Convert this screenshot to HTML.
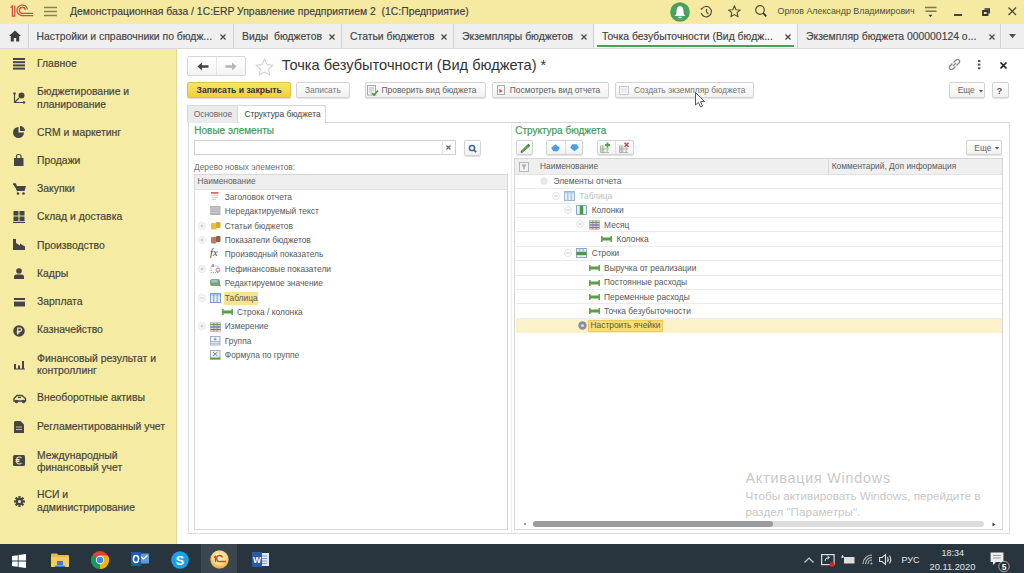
<!DOCTYPE html>
<html><head><meta charset="utf-8">
<style>
*{margin:0;padding:0;box-sizing:border-box}
html,body{width:1024px;height:573px;overflow:hidden;background:#fff;font-family:"Liberation Sans",sans-serif;color:#404040}
.si{-webkit-text-stroke:0.18px currentColor}.tab,.ht{-webkit-text-stroke:0.15px currentColor}
.a{position:absolute;white-space:nowrap}
svg{position:absolute;overflow:visible}
#hdr{left:0;top:0;width:1024px;height:24px;background:#f6eaa3}
.ht{font-size:10.4px;color:#3c3c3c}
#tabs{left:0;top:24px;width:1024px;height:25px;background:#efefef;border-bottom:1px solid #d9d9d9}
.tab{position:absolute;top:0;height:24px;border-left:1px solid #d2d2d2;font-size:10.4px;line-height:26px;color:#424242;padding-left:8px;white-space:nowrap}
#side{left:0;top:49px;width:177px;height:495px;background:#f6eba3;border-right:1px solid #e3d799}
.si{position:absolute;left:37px;font-size:10.4px;line-height:12.3px;color:#45433a;white-space:nowrap}
#task{left:0;top:544px;width:1024px;height:29px;background:#28353f}
</style></head><body>
<div class="a" id="hdr">
  <!-- 1C logo -->
  <svg style="left:0px;top:0px" width="40" height="22"><g fill="none" stroke="#cf4b3c" stroke-width="1.25"><path d="M10.6 7.6L12.4 6V16H14.8V5.5"/><path d="M27.5 9.4A5.3 5.3 0 1 0 22.6 15.6H33"/><path d="M25.4 10A3 3 0 1 0 22.6 13.3H33"/></g></svg>
  <svg style="left:44px;top:6px" width="13" height="11"><g stroke="#8a8050" stroke-width="1.3"><path d="M0 1.5H13M0 5.5H13M0 9.5H13"/></g></svg>
  <div class="a ht" style="left:70px;top:5.9px">Демонстрационная база / 1С:ERP Управление предприятием 2&nbsp; (1С:Предприятие)</div>
  <svg style="left:669.5px;top:1.6px" width="20" height="20"><circle cx="10" cy="10" r="9.8" fill="#4aa15c"/><path d="M10 4.2Q6.8 4.2 6.6 8.5L6.3 12L4.6 14H15.4L13.7 12L13.4 8.5Q13.2 4.2 10 4.2Z" fill="#fff"/><ellipse cx="10" cy="15.6" rx="1.8" ry="1" fill="#fff"/></svg>
  <svg style="left:700px;top:6px" width="13" height="11"><g fill="none" stroke="#585038" stroke-width="1.15"><path d="M1.6 3.2A5.2 5.2 0 1 1 1.2 7"/><path d="M6.5 3V6L8.5 8.2"/></g><circle cx="1.5" cy="2.8" r="0.9" fill="#585038"/></svg>
  <svg style="left:727.5px;top:4.8px" width="13" height="12.5"><path d="M6.4 0.8L8 4.7L12.2 5L9 7.7L10 11.8L6.4 9.6L2.8 11.8L3.8 7.7L0.6 5L4.8 4.7Z" fill="none" stroke="#585038" stroke-width="1.1" stroke-linejoin="round"/></svg>
  <svg style="left:755px;top:5px" width="13" height="13"><circle cx="5" cy="5" r="4.3" fill="none" stroke="#585038" stroke-width="1.2"/><path d="M8.2 8.2L11.3 11.3" stroke="#333" stroke-width="1.8"/></svg>
  <div class="a" style="left:777.5px;top:6.1px;font-size:8.9px;color:#4e4a3c">Орлов Александр Владимирович</div>
  <svg style="left:924.5px;top:5.5px" width="12" height="12"><g stroke="#7d7456" stroke-width="1.4"><path d="M0 1.5H11.5M0.5 5.2H11.5"/></g><path d="M3.5 8.8H7.5L5.5 11Z" fill="#333"/></svg>
  <svg style="left:954px;top:13.5px" width="8" height="2"><path d="M0 1H8" stroke="#333" stroke-width="1.8"/></svg>
  <svg style="left:981.5px;top:8px" width="8" height="7.5"><path d="M1 3H5.5V7H1Z" fill="none" stroke="#333" stroke-width="1.8"/><path d="M2.5 1H7.2V5.5" fill="none" stroke="#333" stroke-width="1.6"/></svg>
  <svg style="left:1008px;top:6.8px" width="8.5" height="8.5"><path d="M0.5 0.5L8 8M8 0.5L0.5 8" stroke="#444" stroke-width="1.2"/></svg>
</div>
<div class="a" id="tabs">
  <svg style="left:9px;top:6px" width="12" height="12" viewBox="0 0 12 12"><path d="M6 0.5L0 6H1.8V11.5H4.8V8H7.2V11.5H10.2V6H12Z" fill="#3c3c3c"/></svg>
  <div class="tab" style="left:27.5px;width:205.5px;padding-left:8px">Настройки и справочники по бюдж...<svg style="left:191px;top:9.5px" width="6" height="6"><path d="M0.5 0.5L5.5 5.5M5.5 0.5L0.5 5.5" stroke="#4a4a4a" stroke-width="1.3"/></svg></div>
  <div class="tab" style="left:233px;width:108px">Виды&nbsp; бюджетов<svg style="left:94.5px;top:9.5px" width="6" height="6"><path d="M0.5 0.5L5.5 5.5M5.5 0.5L0.5 5.5" stroke="#4a4a4a" stroke-width="1.3"/></svg></div>
  <div class="tab" style="left:341px;width:112px">Статьи бюджетов<svg style="left:98.5px;top:9.5px" width="6" height="6"><path d="M0.5 0.5L5.5 5.5M5.5 0.5L0.5 5.5" stroke="#4a4a4a" stroke-width="1.3"/></svg></div>
  <div class="tab" style="left:453px;width:140px">Экземпляры бюджетов<svg style="left:126.5px;top:9.5px" width="6" height="6"><path d="M0.5 0.5L5.5 5.5M5.5 0.5L0.5 5.5" stroke="#4a4a4a" stroke-width="1.3"/></svg></div>
  <div class="tab" style="left:593px;width:204px;background:#f8f8f8">Точка безубыточности (Вид бюдж...<svg style="left:190.5px;top:9.5px" width="6" height="6"><path d="M0.5 0.5L5.5 5.5M5.5 0.5L0.5 5.5" stroke="#4a4a4a" stroke-width="1.3"/></svg><div style="position:absolute;left:3px;right:3px;bottom:1px;height:2px;background:#4aa05a"></div></div>
  <div class="tab" style="left:797px;width:203px">Экземпляр бюджета 000000124 о...<svg style="left:191px;top:9.5px" width="6" height="6"><path d="M0.5 0.5L5.5 5.5M5.5 0.5L0.5 5.5" stroke="#4a4a4a" stroke-width="1.3"/></svg></div>
  <div class="tab" style="left:1000px;width:24px"></div>
  <svg style="left:1008.6px;top:9.8px" width="7" height="4.5"><path d="M0 0H7L3.5 4.3Z" fill="#505050"/></svg>
</div>
<div class="a" id="side">
  <div class="si" style="top:9.0px">Главное</div>
  <svg style="left:13px;top:calc(-49px + 58px)" width="12" height="12"><g fill="#454545"><rect y="0" width="12" height="2"/><rect y="3.2" width="12" height="2"/><rect y="6.4" width="12" height="2"/><rect y="9.6" width="12" height="2"/></g></svg>
  <div class="si" style="top:37.4px">Бюджетирование и<br>планирование</div>
  <svg style="left:13px;top:calc(-49px + 92px)" width="12" height="12"><g fill="none" stroke="#454545" stroke-width="1.2"><path d="M1.5 1.5V10.5H11"/><path d="M1.5 10.5L6 6"/></g><g fill="#454545"><circle cx="1.5" cy="1.5" r="1.2"/><circle cx="11" cy="10.5" r="1.2"/><circle cx="8.5" cy="3.5" r="3"/></g></svg>
  <div class="si" style="top:77.5px">CRM и маркетинг</div>
  <svg style="left:13px;top:calc(-49px + 126px)" width="12" height="12"><path d="M5.5 1A5.5 5.5 0 1 0 11 6.5H5.5Z" fill="#454545"/><path d="M7 0A5 5 0 0 1 12 5H7Z" fill="#454545"/></svg>
  <div class="si" style="top:105.9px">Продажи</div>
  <svg style="left:14px;top:calc(-49px + 154px)" width="10" height="12"><path d="M0 4H9.5V12H0Z" fill="#454545"/><path d="M2.5 5V2Q2.5 0.5 4.75 0.5Q7 0.5 7 2V5" fill="none" stroke="#454545" stroke-width="1.2"/></svg>
  <div class="si" style="top:134.2px">Закупки</div>
  <svg style="left:12.5px;top:calc(-49px + 183px)" width="13" height="12"><path d="M0 1H2.5L3.5 3H13L11.5 8H4.5Z" fill="#454545"/><path d="M0 1H2.5L4.5 8" fill="none" stroke="#454545" stroke-width="1.3"/><circle cx="5" cy="10.5" r="1.3" fill="#454545"/><circle cx="10.5" cy="10.5" r="1.3" fill="#454545"/></svg>
  <div class="si" style="top:162.4px">Склад и доставка</div>
  <svg style="left:13px;top:calc(-49px + 211px)" width="12" height="12"><g fill="#454545"><rect x="0.5" y="0" width="5" height="4.5"/><rect x="6.5" y="0" width="5" height="4.5"/><rect x="0.5" y="5.5" width="5" height="4.5"/><rect x="6.5" y="5.5" width="5" height="4.5"/><rect x="0" y="10.8" width="12" height="1.2"/></g></svg>
  <div class="si" style="top:190.7px">Производство</div>
  <svg style="left:13px;top:calc(-49px + 239px)" width="12" height="11"><path d="M0 11V0H3V4L7 6.5V4.5L12 7.5V11Z" fill="#454545"/></svg>
  <div class="si" style="top:218.9px">Кадры</div>
  <svg style="left:14px;top:calc(-49px + 268px)" width="10" height="11"><circle cx="5" cy="3" r="2.8" fill="#454545"/><path d="M0 11V8.5Q0 6.5 2.5 6.5H7.5Q10 6.5 10 8.5V11Z" fill="#454545"/></svg>
  <div class="si" style="top:247.1px">Зарплата</div>
  <svg style="left:13.5px;top:calc(-49px + 298px)" width="11" height="9"><rect x="0" y="0" width="11" height="8.5" fill="#454545"/><rect x="0" y="2" width="11" height="1.6" fill="#f7eba6"/></svg>
  <div class="si" style="top:275.1px">Казначейство</div>
  <svg style="left:13px;top:calc(-49px + 325px)" width="12" height="12"><circle cx="6" cy="6" r="5.8" fill="#454545"/><path d="M4.7 9.5V3H6.8Q8.5 3 8.5 4.7Q8.5 6.4 6.8 6.4H3.8M3.8 7.8H6.5" fill="none" stroke="#f7eba6" stroke-width="1.2"/></svg>
  <div class="si" style="top:304.2px">Финансовый результат и<br>контроллинг</div>
  <svg style="left:13.5px;top:calc(-49px + 361px)" width="11" height="9"><g fill="#454545"><rect x="0" y="3" width="2" height="5"/><rect x="4" y="4.5" width="2" height="3.5"/><rect x="8" y="0" width="2" height="8"/><rect x="0" y="7.5" width="11" height="1"/></g></svg>
  <div class="si" style="top:343.4px">Внеоборотные активы</div>
  <svg style="left:12.5px;top:calc(-49px + 394px)" width="14" height="10"><path d="M1 7V4.5L4 1.5H9L12.5 4.5V7Z" fill="none" stroke="#454545" stroke-width="1.4"/><path d="M5 3.5H8" stroke="#454545" stroke-width="1.2"/><circle cx="3.5" cy="7.5" r="1.8" fill="#454545"/><circle cx="10.5" cy="7.5" r="1.8" fill="#454545"/></svg>
  <div class="si" style="top:372.0px">Регламентированный учет</div>
  <svg style="left:14px;top:calc(-49px + 421px)" width="10" height="12"><path d="M0 1.5Q0 0 1.5 0H6.5L10 3.5V12H0Z" fill="#454545"/><rect x="2" y="5.5" width="6" height="1" fill="#c9c08a"/><rect x="2" y="8" width="6" height="1" fill="#c9c08a"/></svg>
  <div class="si" style="top:400.5px">Международный<br>финансовый учет</div>
  <svg style="left:13px;top:calc(-49px + 455px)" width="12" height="11"><rect x="0" y="0" width="12" height="11" rx="1.5" fill="#454545"/><path d="M8.5 3Q7.8 2 6.3 2Q3.5 2 3.5 5.5Q3.5 9 6.3 9Q7.8 9 8.5 8M2.5 4.6H6.5M2.5 6.4H6.5" fill="none" stroke="#f0e6b0" stroke-width="1.1"/></svg>
  <div class="si" style="top:440.3px">НСИ и<br>администрирование</div>
  <svg style="left:13.5px;top:calc(-49px + 495.5px)" width="11" height="11" viewBox="0 0 11 11"><path d="M4.5 0H6.5L6.8 1.6L8.2 2.3L9.6 1.4L10.9 2.8L10 4.2L10.5 5.6L12 6" fill="none"/><g fill="#454545"><circle cx="5.5" cy="5.5" r="3.6"/><rect x="4.4" y="0" width="2.2" height="11"/><rect x="0" y="4.4" width="11" height="2.2"/><rect x="4.4" y="0" width="2.2" height="11" transform="rotate(45 5.5 5.5)"/><rect x="4.4" y="0" width="2.2" height="11" transform="rotate(-45 5.5 5.5)"/></g><circle cx="5.5" cy="5.5" r="1.5" fill="#f7eba6"/></svg>
</div>
<div id="content">
<div class="a" style="left:187px;top:55.5px;width:58.50px;height:20.00px;border:1px solid #d6d6d6;border-radius:2px;background:linear-gradient(#ffffff,#f3f3f3)"></div>
<div class="a" style="left:216px;top:56.5px;width:1.00px;height:18.00px;background:#e6e6e6"></div>
<svg style="left:197px;top:62px" width="12" height="9"><path d="M0.5 4.5L5 0.5V3.2H11.5V5.8H5V8.5Z" fill="#444"/></svg>
<svg style="left:225px;top:62px" width="12" height="9"><path d="M11.5 4.5L7 0.5V3.2H0.5V5.8H7V8.5Z" fill="#b4b4b4"/></svg>
<svg style="left:254.5px;top:57.5px" width="19" height="17"><path d="M9.5 1L12 6.6L18 7.2L13.5 11.2L14.8 17L9.5 14L4.2 17L5.5 11.2L1 7.2L7 6.6Z" fill="none" stroke="#d2d2d2" stroke-width="1.1" stroke-linejoin="round"/></svg>
<div class="a" style="left:281.7px;top:58.39px;font-size:14.6px;line-height:1;color:#333;font-weight:normal;">Точка безубыточности (Вид бюджета) *</div>
<svg style="left:948px;top:58px" width="13" height="13"><g fill="none" stroke="#888" stroke-width="1.3"><path d="M5.5 4.5L7.8 2.2Q9.5 0.5 11 2Q12.5 3.5 10.8 5.2L8.5 7.5"/><path d="M7.5 8.5L5.2 10.8Q3.5 12.5 2 11Q0.5 9.5 2.2 7.8L4.5 5.5"/><path d="M5 8L8 5"/></g></svg>
<svg style="left:977.6px;top:60.3px" width="3" height="9"><g fill="#555"><rect x="0" y="0" width="2.4" height="2"/><rect x="0" y="3.6" width="2.4" height="2"/><rect x="0" y="7.2" width="2.4" height="2"/></g></svg>
<svg style="left:999.5px;top:61.5px" width="7" height="7"><path d="M0.5 0.5L6.5 6.5M6.5 0.5L0.5 6.5" stroke="#222" stroke-width="1.7"/></svg>
<div class="a" style="left:187.2px;top:82.3px;width:103.50px;height:16.20px;border:1px solid #dcc04a;border-radius:2px;background:linear-gradient(#fae36a,#f2d035);box-shadow:0 1px 1px rgba(0,0,0,0.15)"></div>
<div class="a" style="left:196.6px;top:86.29px;font-size:8.6px;line-height:1;color:#333;font-weight:bold;">Записать и закрыть</div>
<div class="a" style="left:296px;top:82.3px;width:54.00px;height:16.20px;border:1px solid #d3d3d3;border-radius:2px;background:linear-gradient(#fefefe,#f1f1f1);box-shadow:0 1px 1px rgba(0,0,0,0.12)"></div>
<div class="a" style="left:305px;top:86.46px;font-size:8.4px;line-height:1;color:#777;font-weight:normal;">Записать</div>
<div class="a" style="left:364.6px;top:82.3px;width:121.10px;height:16.20px;border:1px solid #d3d3d3;border-radius:2px;background:linear-gradient(#fefefe,#f1f1f1);box-shadow:0 1px 1px rgba(0,0,0,0.12)"></div>
<svg style="left:367px;top:85px" width="12" height="11"><rect x="0.5" y="0.5" width="8" height="9.5" fill="#f4f4f4" stroke="#aaa"/><path d="M2 3H7M2 5H7M2 7H5" stroke="#bbb"/><path d="M5 8L7 10L11 5.5" fill="none" stroke="#3a9a4a" stroke-width="1.6"/></svg>
<div class="a" style="left:381.6px;top:86.46px;font-size:8.4px;line-height:1;color:#606060;font-weight:normal;">Проверить вид бюджета</div>
<div class="a" style="left:491.5px;top:82.3px;width:117.30px;height:16.20px;border:1px solid #d3d3d3;border-radius:2px;background:linear-gradient(#fefefe,#f1f1f1);box-shadow:0 1px 1px rgba(0,0,0,0.12)"></div>
<svg style="left:496.5px;top:85px" width="8" height="10"><rect x="0.5" y="0.5" width="7" height="9" fill="#f6f6f6" stroke="#aaa"/><path d="M2.5 4L5.5 6L2.5 8Z" fill="#d04030"/></svg>
<div class="a" style="left:509.8px;top:86.46px;font-size:8.4px;line-height:1;color:#606060;font-weight:normal;">Посмотреть вид отчета</div>
<div class="a" style="left:615.2px;top:82.3px;width:139.00px;height:16.20px;border:1px solid #d3d3d3;border-radius:2px;background:linear-gradient(#fefefe,#f1f1f1);box-shadow:0 1px 1px rgba(0,0,0,0.12)"></div>
<svg style="left:619px;top:86px" width="10" height="9"><rect x="0.5" y="0.5" width="9" height="8" fill="#f6f6f6" stroke="#c8c8c8"/><path d="M2 3H8M2 5H8" stroke="#ddd"/></svg>
<div class="a" style="left:633.9px;top:86.46px;font-size:8.4px;line-height:1;color:#777;font-weight:normal;">Создать экземпляр бюджета</div>
<div class="a" style="left:949.4px;top:82.2px;width:35.90px;height:16.10px;border:1px solid #d3d3d3;border-radius:2px;background:linear-gradient(#fefefe,#f1f1f1);box-shadow:0 1px 1px rgba(0,0,0,0.12)"></div>
<div class="a" style="left:957.7px;top:86.46px;font-size:8.4px;line-height:1;color:#666;font-weight:normal;">Еще</div>
<svg style="left:978.5px;top:89.5px" width="4" height="3"><path d="M0 0H4L2 2.5Z" fill="#555"/></svg>
<div class="a" style="left:991.6px;top:82.2px;width:17.10px;height:16.10px;border:1px solid #d3d3d3;border-radius:2px;background:linear-gradient(#fefefe,#f1f1f1);box-shadow:0 1px 1px rgba(0,0,0,0.12)"></div>
<div class="a" style="left:996.6px;top:85.72px;font-size:9.5px;line-height:1;color:#555;font-weight:bold;">?</div>
<div class="a" style="left:187.5px;top:122px;width:822.00px;height:412.00px;border:1px solid #dcdcdc;border-top-color:#d6d6d6"></div>
<div class="a" style="left:187.3px;top:105.2px;width:51.20px;height:17.80px;border:1px solid #d6d6d6;border-bottom:none;background:#ebebeb"></div>
<div class="a" style="left:238.5px;top:105.2px;width:87.20px;height:17.80px;border:1px solid #d6d6d6;border-bottom:none;border-left:none;background:#fff"></div>
<div class="a" style="left:193.7px;top:110.06px;font-size:8.4px;line-height:1;color:#666;font-weight:normal;">Основное</div>
<div class="a" style="left:244.4px;top:110.06px;font-size:8.4px;line-height:1;color:#444;font-weight:normal;">Структура бюджета</div>
<div class="a" style="left:510.5px;top:123px;width:1.00px;height:410.00px;background:#efefef"></div>
<div class="a" style="left:194.3px;top:126.40px;font-size:10px;line-height:1;color:#3f9a5b;font-weight:normal;-webkit-text-stroke:0.2px currentColor">Новые элементы</div>
<div class="a" style="left:194px;top:139.5px;width:261.60px;height:15.50px;border:1px solid #cfcfcf;background:#fff"></div>
<div class="a" style="left:442px;top:140px;width:1.00px;height:14.50px;background:#e2e2e2"></div>
<svg style="left:446.2px;top:145.2px" width="5" height="5"><path d="M0.5 0.5L4.5 4.5M4.5 0.5L0.5 4.5" stroke="#666" stroke-width="1.2"/></svg>
<div class="a" style="left:463.8px;top:139.5px;width:17.20px;height:16.50px;border:1px solid #d3d3d3;border-radius:2px;background:linear-gradient(#fefefe,#f1f1f1);box-shadow:0 1px 1px rgba(0,0,0,0.12)"></div>
<svg style="left:468px;top:143.5px" width="10" height="10"><circle cx="4" cy="4" r="2.6" fill="none" stroke="#3d6a8e" stroke-width="1.5"/><path d="M5.8 5.8L8.2 8.2" stroke="#3d6a8e" stroke-width="1.8"/></svg>
<div class="a" style="left:194px;top:162.66px;font-size:8.4px;line-height:1;color:#707070;font-weight:normal;">Дерево новых элементов:</div>
<div class="a" style="left:194px;top:173.5px;width:314.30px;height:356.30px;border:1px solid #d6d6d6;background:#fff"></div>
<div class="a" style="left:195px;top:174.5px;width:312.30px;height:15.40px;background:#efefef;border-bottom:1px solid #e2e2e2"></div>
<div class="a" style="left:197.5px;top:176.66px;font-size:8.4px;line-height:1;color:#606060;font-weight:normal;">Наименование</div>
<div class="a" style="left:515.2px;top:125.50px;font-size:10px;line-height:1;color:#3f9a5b;font-weight:normal;-webkit-text-stroke:0.2px currentColor">Структура бюджета</div>
<div class="a" style="left:515.8px;top:139.5px;width:17.00px;height:15.80px;border:1px solid #d3d3d3;border-radius:2px;background:linear-gradient(#fefefe,#f1f1f1);box-shadow:0 1px 1px rgba(0,0,0,0.12)"></div>
<svg style="left:519.5px;top:142.5px" width="10" height="10"><path d="M2.5 9.2L1 9.5L1.3 8L7.5 1.8L9.2 3.5Z" fill="#58a850" stroke="#3a7a38" stroke-width="0.6"/><path d="M7.5 1.8L8.5 0.8L10 2.3L9.2 3.5Z" fill="#555"/><path d="M1 9.5L1.3 8L2.5 9.2Z" fill="#444"/></svg>
<div class="a" style="left:546.4px;top:139.5px;width:37.10px;height:15.80px;border:1px solid #d3d3d3;border-radius:2px;background:linear-gradient(#fefefe,#f1f1f1);box-shadow:0 1px 1px rgba(0,0,0,0.12)"></div>
<div class="a" style="left:564.6px;top:140.5px;width:1.00px;height:13.80px;background:#dedede"></div>
<svg style="left:550.8px;top:143.8px" width="9" height="7.5"><path d="M4.5 0.3L8.8 3.8L6.8 7.2H2.2L0.2 3.8Z" fill="#4a9ee6"/></svg>
<svg style="left:569.8px;top:143.8px" width="9" height="7.5"><path d="M4.5 7.2L8.8 3.7L6.8 0.3H2.2L0.2 3.7Z" fill="#4a9ee6"/></svg>
<div class="a" style="left:596.8px;top:139.5px;width:37.10px;height:15.80px;border:1px solid #d3d3d3;border-radius:2px;background:linear-gradient(#fefefe,#f1f1f1);box-shadow:0 1px 1px rgba(0,0,0,0.12)"></div>
<div class="a" style="left:614.6px;top:140.5px;width:1.00px;height:13.80px;background:#dedede"></div>
<svg style="left:600px;top:142px" width="11" height="11"><path d="M0.5 3.5V10.5M3.8 3.5V10.5M7.2 5V10.5M0.5 7H9M0.5 10.5H9" stroke="#a8b8a0" stroke-width="0.9"/><path d="M2.2 3L2.2 10.5" stroke="#889880" stroke-width="0.8"/><path d="M7.5 0.5V5.5M5 3H10" stroke="#48a848" stroke-width="1.8"/></svg>
<svg style="left:619px;top:142px" width="11" height="11"><path d="M0.5 3.5V10.5M3.8 3.5V10.5M7.2 5V10.5M0.5 7H9M0.5 10.5H9" stroke="#b8a8a8" stroke-width="0.9"/><path d="M2.2 3L2.2 10.5" stroke="#988888" stroke-width="0.8"/><path d="M5.5 0.8L9.5 4.8M9.5 0.8L5.5 4.8" stroke="#d84040" stroke-width="1.5"/></svg>
<div class="a" style="left:965.9px;top:139.8px;width:36.50px;height:15.40px;border:1px solid #d3d3d3;border-radius:2px;background:linear-gradient(#fefefe,#f1f1f1);box-shadow:0 1px 1px rgba(0,0,0,0.12)"></div>
<div class="a" style="left:974.3px;top:143.76px;font-size:8.4px;line-height:1;color:#666;font-weight:normal;">Еще</div>
<svg style="left:995px;top:147px" width="4" height="3"><path d="M0 0H4L2 2.5Z" fill="#555"/></svg>
<div class="a" style="left:514.2px;top:158px;width:488.60px;height:371.80px;border:1px solid #d6d6d6;background:#fff"></div>
<div class="a" style="left:515.2px;top:159px;width:486.60px;height:15.70px;background:#efefef;border-bottom:1px solid #e2e2e2"></div>
<div class="a" style="left:828px;top:159px;width:1.00px;height:15.70px;background:#dcdcdc"></div>
<svg style="left:518.5px;top:161.5px" width="10" height="10"><rect x="0.5" y="0.5" width="9" height="9" fill="#f2f2f2" stroke="#b8b8b8"/><path d="M2.5 2.5H7.5L5.8 5V7.5L4.2 7V5Z" fill="#aaa"/></svg>
<div class="a" style="left:540px;top:161.66px;font-size:8.4px;line-height:1;color:#606060;font-weight:normal;">Наименование</div>
<div class="a" style="left:831.7px;top:161.86px;font-size:8.4px;line-height:1;color:#606060;font-weight:normal;">Комментарий, Доп информация</div>
<svg style="left:210.5px;top:192.20000000000002px" width="8" height="8"><rect x="0" y="0" width="7.5" height="1.8" fill="#d86a6a"/><path d="M0.5 3.5H7M0.5 5.5H7M0.5 7.5H5" stroke="#c8d8c8" stroke-width="1"/></svg>
<div class="a" style="left:224.8px;top:192.76px;font-size:8.4px;line-height:1;color:#585858;font-weight:normal;">Заголовок отчета</div>
<svg style="left:209.7px;top:206.10000000000002px" width="10.5" height="9"><rect x="0" y="0" width="10.5" height="9" fill="#b4b4b4"/><path d="M0 2H10.5M0 4.2H10.5M0 6.4H10.5" stroke="#d6d6d6" stroke-width="0.8"/></svg>
<div class="a" style="left:224.8px;top:207.16px;font-size:8.4px;line-height:1;color:#585858;font-weight:normal;">Нередактируемый текст</div>
<svg style="left:197.8px;top:221.50000000000003px" width="8" height="8"><circle cx="4" cy="4" r="3.5" fill="#fbfbfb" stroke="#dedede" stroke-width="0.8"/><path d="M2.2 4H5.8M4 2.2V5.8" stroke="#bcbcbc" stroke-width="0.8"/></svg>
<svg style="left:210.7px;top:221.50000000000003px" width="10" height="7.5"><rect x="0" y="1" width="5.5" height="6.5" rx="1" fill="#e8c040"/><rect x="5" y="0" width="4.5" height="6" rx="1" fill="#d8a828"/></svg>
<div class="a" style="left:224.8px;top:221.56px;font-size:8.4px;line-height:1;color:#585858;font-weight:normal;">Статьи бюджетов</div>
<svg style="left:197.8px;top:235.90000000000003px" width="8" height="8"><circle cx="4" cy="4" r="3.5" fill="#fbfbfb" stroke="#dedede" stroke-width="0.8"/><path d="M2.2 4H5.8M4 2.2V5.8" stroke="#bcbcbc" stroke-width="0.8"/></svg>
<svg style="left:210.7px;top:235.90000000000003px" width="10" height="7.5"><rect x="0" y="1" width="5.5" height="6.5" rx="1" fill="#b88060"/><rect x="5" y="0" width="4.5" height="6" rx="1" fill="#906048"/></svg>
<div class="a" style="left:224.8px;top:235.96px;font-size:8.4px;line-height:1;color:#585858;font-weight:normal;">Показатели бюджетов</div>
<div class="a" style="left:210px;top:248.30px;font-family:'Liberation Serif',serif;font-style:italic;font-size:10.5px;line-height:1;color:#444">fx</div>
<div class="a" style="left:224.8px;top:250.36px;font-size:8.4px;line-height:1;color:#585858;font-weight:normal;">Производный показатель</div>
<svg style="left:197.8px;top:264.7px" width="8" height="8"><circle cx="4" cy="4" r="3.5" fill="#fbfbfb" stroke="#dedede" stroke-width="0.8"/><path d="M2.2 4H5.8M4 2.2V5.8" stroke="#bcbcbc" stroke-width="0.8"/></svg>
<svg style="left:210.2px;top:263.7px" width="10" height="9"><rect x="1" y="2" width="7" height="6.5" fill="none" stroke="#7a9ad0" stroke-width="0.9" stroke-dasharray="1.2 1"/><path d="M3 0V3" stroke="#555" stroke-width="1"/><circle cx="8" cy="6" r="2" fill="none" stroke="#d07070" stroke-width="0.9"/></svg>
<div class="a" style="left:224.8px;top:264.76px;font-size:8.4px;line-height:1;color:#585858;font-weight:normal;">Нефинансовые показатели</div>
<svg style="left:210.2px;top:279.1px" width="10.5" height="7"><rect x="0" y="0" width="10" height="7" rx="2" fill="#78a870"/><rect x="1.5" y="0.8" width="6" height="2.8" fill="#a0c0e0"/><path d="M9 5.5L10.5 7" stroke="#c86040" stroke-width="1.2"/></svg>
<div class="a" style="left:224.8px;top:279.16px;font-size:8.4px;line-height:1;color:#585858;font-weight:normal;">Редактируемое значение</div>
<svg style="left:197.8px;top:293.5px" width="8" height="8"><circle cx="4" cy="4" r="3.5" fill="#fbfbfb" stroke="#dedede" stroke-width="0.8"/><path d="M2.2 4H5.8" stroke="#bcbcbc" stroke-width="0.8"/></svg>
<svg style="left:209.7px;top:292.7px" width="11" height="10"><rect x="0.5" y="0.5" width="10" height="9" fill="#e4ecf6" stroke="#7aa0d0"/><path d="M3.8 0.5V9.5M7.2 0.5V9.5" stroke="#7aa0d0"/><rect x="0.5" y="0.5" width="10" height="2" fill="#7aa0d0" opacity="0.5"/></svg>
<div class="a" style="left:223.5px;top:291.5px;width:34.50px;height:13.30px;background:#f8e394;border-radius:1px"></div>
<div class="a" style="left:224.8px;top:293.56px;font-size:8.4px;line-height:1;color:#585858;font-weight:normal;">Таблица</div>
<svg style="left:222.2px;top:309.40000000000003px" width="11" height="6"><rect x="0" y="0" width="1.6" height="6" fill="#6aa060"/><rect x="9.4" y="0" width="1.6" height="6" fill="#6aa060"/><rect x="1" y="1.5" width="9" height="3" fill="#5aa040"/></svg>
<div class="a" style="left:237.0px;top:307.96px;font-size:8.4px;line-height:1;color:#585858;font-weight:normal;">Строка / колонка</div>
<svg style="left:197.8px;top:322.3px" width="8" height="8"><circle cx="4" cy="4" r="3.5" fill="#fbfbfb" stroke="#dedede" stroke-width="0.8"/><path d="M2.2 4H5.8M4 2.2V5.8" stroke="#bcbcbc" stroke-width="0.8"/></svg>
<svg style="left:210px;top:321.5px" width="11" height="10"><rect x="0.5" y="0.5" width="10" height="9" fill="#f0f0f0" stroke="#aaa" stroke-width="0.6"/><path d="M0.5 2.5H10.5" stroke="#5aa040" stroke-width="1.5"/><path d="M0.5 5H10.5" stroke="#4a80d0" stroke-width="1.5"/><path d="M0.5 7.5H10.5" stroke="#d05050" stroke-width="1.5"/><path d="M3.8 0.5V9.5M7.2 0.5V9.5" stroke="#888" stroke-width="0.8"/></svg>
<div class="a" style="left:224.8px;top:322.36px;font-size:8.4px;line-height:1;color:#585858;font-weight:normal;">Измерение</div>
<svg style="left:210px;top:335.9px" width="10.5" height="9.5"><rect x="0.5" y="0.5" width="9.5" height="8.5" fill="#f2f4f8" stroke="#98a8c0" stroke-width="0.9"/><path d="M0.5 5.5H10M0.5 7.3H10" stroke="#98a8c0" stroke-width="0.8"/><path d="M5.2 1.8V4.5M3.8 3.1H6.6" stroke="#7a8aa0" stroke-width="0.9"/></svg>
<div class="a" style="left:224.8px;top:336.76px;font-size:8.4px;line-height:1;color:#585858;font-weight:normal;">Группа</div>
<svg style="left:210px;top:350.3px" width="10.5" height="9.5"><rect x="0.5" y="0.5" width="9.5" height="8.5" fill="#eef2f6" stroke="#98a8c0" stroke-width="0.9"/><rect x="0" y="7.5" width="10.5" height="2" fill="#5aa040"/><path d="M3 2L7.5 6M7.5 2L3 6" stroke="#708090" stroke-width="1"/></svg>
<div class="a" style="left:224.8px;top:351.16px;font-size:8.4px;line-height:1;color:#585858;font-weight:normal;">Формула по группе</div>
<div class="a" style="left:515.6px;top:188.1px;width:486.20px;height:1.00px;background:#ebebeb"></div>
<div class="a" style="left:515.6px;top:202.5px;width:486.20px;height:1.00px;background:#ebebeb"></div>
<div class="a" style="left:515.6px;top:216.9px;width:486.20px;height:1.00px;background:#ebebeb"></div>
<div class="a" style="left:515.6px;top:231.3px;width:486.20px;height:1.00px;background:#ebebeb"></div>
<div class="a" style="left:515.6px;top:245.7px;width:486.20px;height:1.00px;background:#ebebeb"></div>
<div class="a" style="left:515.6px;top:260.1px;width:486.20px;height:1.00px;background:#ebebeb"></div>
<div class="a" style="left:515.6px;top:274.5px;width:486.20px;height:1.00px;background:#ebebeb"></div>
<div class="a" style="left:515.6px;top:288.9px;width:486.20px;height:1.00px;background:#ebebeb"></div>
<div class="a" style="left:515.6px;top:303.3px;width:486.20px;height:1.00px;background:#ebebeb"></div>
<div class="a" style="left:515.6px;top:317.7px;width:486.20px;height:1.00px;background:#ebebeb"></div>
<div class="a" style="left:515.6px;top:332.1px;width:486.20px;height:1.00px;background:#ebebeb"></div>
<div class="a" style="left:515.6px;top:318.5px;width:486.20px;height:14.20px;background:#fcf2ca"></div>
<svg style="left:539.8px;top:177.2px" width="8" height="8"><circle cx="4" cy="4" r="3.3" fill="#e8e8e8" stroke="#e0e0e0" stroke-width="0.8"/></svg>
<div class="a" style="left:553.4px;top:177.46px;font-size:8.4px;line-height:1;color:#585858;font-weight:normal;">Элементы отчета</div>
<svg style="left:552.0px;top:191.6px" width="8" height="8"><circle cx="4" cy="4" r="3.5" fill="#fbfbfb" stroke="#dedede" stroke-width="0.8"/><path d="M2.2 4H5.8" stroke="#bcbcbc" stroke-width="0.8"/></svg>
<svg style="left:564.0px;top:191.1px" width="11" height="10"><rect x="0.5" y="0.5" width="10" height="9" fill="#e4ecf6" stroke="#9ab8dc"/><path d="M3.8 0.5V9.5M7.2 0.5V9.5" stroke="#9ab8dc"/><rect x="0.5" y="0.5" width="10" height="2" fill="#9ab8dc" opacity="0.5"/></svg>
<div class="a" style="left:579.3px;top:191.86px;font-size:8.4px;line-height:1;color:#bdbdbd;font-weight:normal;">Таблица</div>
<svg style="left:564.1999999999999px;top:206.0px" width="8" height="8"><circle cx="4" cy="4" r="3.5" fill="#fbfbfb" stroke="#dedede" stroke-width="0.8"/><path d="M2.2 4H5.8" stroke="#bcbcbc" stroke-width="0.8"/></svg>
<svg style="left:576.4px;top:205.2px" width="11" height="10"><rect x="0.5" y="0.5" width="10" height="9" fill="#e8eef6" stroke="#8aa8d0"/><rect x="3.8" y="0.5" width="3.4" height="9" fill="#4a9a40"/></svg>
<div class="a" style="left:591.6999999999999px;top:206.26px;font-size:8.4px;line-height:1;color:#585858;font-weight:normal;">Колонки</div>
<svg style="left:576.4px;top:220.4px" width="8" height="8"><circle cx="4" cy="4" r="3.5" fill="#fbfbfb" stroke="#dedede" stroke-width="0.8"/><path d="M2.2 4H5.8" stroke="#bcbcbc" stroke-width="0.8"/></svg>
<svg style="left:588.8px;top:219.6px" width="11" height="10"><rect x="0.5" y="0.5" width="10" height="9" fill="#f0f0f0" stroke="#aaa" stroke-width="0.6"/><path d="M0.5 2.5H10.5" stroke="#5aa040" stroke-width="1.5"/><path d="M0.5 5H10.5" stroke="#4a80d0" stroke-width="1.5"/><path d="M0.5 7.5H10.5" stroke="#d05050" stroke-width="1.5"/><path d="M3.8 0.5V9.5M7.2 0.5V9.5" stroke="#888" stroke-width="0.8"/></svg>
<div class="a" style="left:604.0999999999999px;top:220.66px;font-size:8.4px;line-height:1;color:#585858;font-weight:normal;">Месяц</div>
<svg style="left:601.2px;top:236.29999999999998px" width="11" height="6"><rect x="0" y="0" width="1.6" height="6" fill="#6aa060"/><rect x="9.4" y="0" width="1.6" height="6" fill="#6aa060"/><rect x="1" y="1.5" width="9" height="3" fill="#5aa040"/></svg>
<div class="a" style="left:616.5px;top:235.06px;font-size:8.4px;line-height:1;color:#585858;font-weight:normal;">Колонка</div>
<svg style="left:564.1999999999999px;top:249.20000000000002px" width="8" height="8"><circle cx="4" cy="4" r="3.5" fill="#fbfbfb" stroke="#dedede" stroke-width="0.8"/><path d="M2.2 4H5.8" stroke="#bcbcbc" stroke-width="0.8"/></svg>
<svg style="left:576.4px;top:248.4px" width="11" height="10"><rect x="0.5" y="0.5" width="10" height="9" fill="#e8eef6" stroke="#8aa8d0"/><rect x="0.5" y="3.8" width="10" height="3.4" fill="#4a9a40"/><path d="M3.8 0.5V3.8M7.2 0.5V3.8" stroke="#8aa8d0"/></svg>
<div class="a" style="left:591.6999999999999px;top:249.46px;font-size:8.4px;line-height:1;color:#585858;font-weight:normal;">Строки</div>
<svg style="left:588.8px;top:265.1px" width="11" height="6"><rect x="0" y="0" width="1.6" height="6" fill="#6aa060"/><rect x="9.4" y="0" width="1.6" height="6" fill="#6aa060"/><rect x="1" y="1.5" width="9" height="3" fill="#5aa040"/></svg>
<div class="a" style="left:604.0999999999999px;top:263.86px;font-size:8.4px;line-height:1;color:#585858;font-weight:normal;">Выручка от реализации</div>
<svg style="left:588.8px;top:279.5px" width="11" height="6"><rect x="0" y="0" width="1.6" height="6" fill="#6aa060"/><rect x="9.4" y="0" width="1.6" height="6" fill="#6aa060"/><rect x="1" y="1.5" width="9" height="3" fill="#5aa040"/></svg>
<div class="a" style="left:604.0999999999999px;top:278.26px;font-size:8.4px;line-height:1;color:#585858;font-weight:normal;">Постоянные расходы</div>
<svg style="left:588.8px;top:293.90000000000003px" width="11" height="6"><rect x="0" y="0" width="1.6" height="6" fill="#6aa060"/><rect x="9.4" y="0" width="1.6" height="6" fill="#6aa060"/><rect x="1" y="1.5" width="9" height="3" fill="#5aa040"/></svg>
<div class="a" style="left:604.0999999999999px;top:292.66px;font-size:8.4px;line-height:1;color:#585858;font-weight:normal;">Переменные расходы</div>
<svg style="left:588.8px;top:308.3px" width="11" height="6"><rect x="0" y="0" width="1.6" height="6" fill="#6aa060"/><rect x="9.4" y="0" width="1.6" height="6" fill="#6aa060"/><rect x="1" y="1.5" width="9" height="3" fill="#5aa040"/></svg>
<div class="a" style="left:604.0999999999999px;top:307.06px;font-size:8.4px;line-height:1;color:#585858;font-weight:normal;">Точка безубыточности</div>
<svg style="left:577.5px;top:320.70000000000005px" width="9" height="9"><circle cx="4.5" cy="4.5" r="4.2" fill="#8a8fa0"/><circle cx="4.5" cy="4.5" r="1.6" fill="#d8dae0"/></svg>
<div class="a" style="left:588px;top:319.5px;width:75.30px;height:12.60px;background:#f8dc78;border:1px solid #eccb5a"></div>
<div class="a" style="left:590.5px;top:321.46px;font-size:8.4px;line-height:1;color:#585858;font-weight:normal;">Настроить ячейки</div>
<svg style="left:522.5px;top:522px" width="4" height="4"><circle cx="2" cy="2" r="1.2" fill="#999"/></svg>
<div class="a" style="left:533.3px;top:520.8px;width:450.70px;height:5.80px;background:#dcdcdc;border-radius:3px"></div>
<div class="a" style="left:533.3px;top:520.8px;width:240.00px;height:5.80px;background:#9c9c9c;border-radius:3px"></div>
<svg style="left:991.5px;top:522px" width="4" height="5"><path d="M0.5 0.5L3.5 2.5L0.5 4.5Z" fill="#444"/></svg>
<svg style="left:695px;top:92px" width="11" height="16"><path d="M0.5 0.5V13L3.4 10.4L5.6 15L7.6 14.1L5.5 9.6H9.6Z" fill="#fff" stroke="#555" stroke-width="1" stroke-linejoin="round"/></svg>
<div class="a" style="left:745.5px;top:471.14px;font-size:14.3px;line-height:1;color:#c8c8c8;font-weight:normal;letter-spacing:0.8px">Активация Windows</div>
<div class="a" style="left:745.5px;top:490.06px;font-size:11.7px;line-height:1;color:#c8c8c8;font-weight:normal;">Чтобы активировать Windows, перейдите в</div>
<div class="a" style="left:745.5px;top:505.85px;font-size:11.7px;line-height:1;color:#c8c8c8;font-weight:normal;">раздел "Параметры".</div>
</div>
<div class="a" id="task">
  <!-- windows logo -->
  <svg style="left:12px;top:9.5px" width="14" height="14"><g fill="#fff"><path d="M0 2L5.8 1.2V6.6H0Z"/><path d="M6.6 1.1L14 0V6.6H6.6Z"/><path d="M0 7.4H5.8V12.8L0 12Z"/><path d="M6.6 7.4H14V14L6.6 12.9Z"/></g></svg>
  <!-- explorer -->
  <svg style="left:51px;top:9px" width="18" height="15"><path d="M0 1.5Q0 0.5 1 0.5H6L7.5 2H17Q18 2 18 3V14H0Z" fill="#e8b84a"/><rect x="0" y="4" width="18" height="10" fill="#f5cf5e"/><rect x="6" y="8" width="6" height="4" fill="#3a80c8"/><rect x="4" y="12.5" width="10" height="1.5" fill="#3a80c8"/></svg>
  <!-- chrome -->
  <svg style="left:91px;top:6.5px" width="18" height="18" viewBox="0 0 18 18"><circle cx="9" cy="9" r="9" fill="#db4437"/><path d="M9 9L1.2 4.5A9 9 0 0 0 9 18Z" fill="#0f9d58"/><path d="M9 9L9 18A9 9 0 0 0 16.8 4.5Z" fill="#f4b400"/><path d="M9 9L16.8 4.5 9 4.5Z" fill="#f4b400"/><circle cx="9" cy="9" r="4.2" fill="#fff"/><circle cx="9" cy="9" r="3.3" fill="#4285f4"/></svg>
  <!-- outlook -->
  <svg style="left:131px;top:7px" width="18" height="16"><rect x="7" y="2.5" width="11" height="10" fill="#5a9be0"/><path d="M8.5 4.5L12.5 8L16.5 4.5" fill="none" stroke="#fff" stroke-width="1.2"/><rect x="0" y="1" width="10" height="14" fill="#1a5cb0"/><ellipse cx="5" cy="8" rx="2.6" ry="3.4" fill="none" stroke="#fff" stroke-width="1.5"/></svg>
  <!-- skype -->
  <svg style="left:171px;top:6.5px" width="18" height="18"><circle cx="9" cy="9" r="8.8" fill="#1ea0e8"/><text x="9" y="13.6" text-anchor="middle" font-family="Liberation Sans" font-weight="bold" font-size="12.5" fill="#fff">S</text></svg>
  <!-- 1C active -->
  <div class="a" style="left:201px;top:0;width:35.5px;height:29px;background:#3b464e"></div>
  <svg style="left:210px;top:6px" width="19" height="19"><defs><radialGradient id="g1c" cx="0.5" cy="0.4" r="0.6"><stop offset="0" stop-color="#fff6d8"/><stop offset="0.6" stop-color="#f6dc88"/><stop offset="1" stop-color="#e2a838"/></radialGradient></defs><circle cx="9.5" cy="9.5" r="9.2" fill="url(#g1c)"/><g fill="none" stroke="#d8402a" stroke-width="1.3"><path d="M4 7.5L5.5 6.3V12"/><path d="M12.5 7.5A3 3 0 1 0 10 11.5H16"/></g></svg>
  <!-- word -->
  <svg style="left:251.5px;top:8px" width="17" height="15"><rect x="6" y="1" width="11" height="13" fill="#dfe8f5"/><path d="M8 4H15M8 6.5H15M8 9H15M8 11.5H15" stroke="#7a9ad0" stroke-width="1"/><rect x="0" y="0" width="10" height="15" fill="#2b5aa8"/><text x="5" y="11.2" text-anchor="middle" font-family="Liberation Sans" font-weight="bold" font-size="8.5" fill="#fff">W</text></svg>
  <!-- tray -->
  <svg style="left:804px;top:13px" width="10" height="6"><path d="M0.5 5.5L5 1L9.5 5.5" fill="none" stroke="#ccc" stroke-width="1.2"/></svg>
  <svg style="left:821px;top:10px" width="15" height="13"><rect x="0.6" y="0.6" width="12.5" height="10" fill="none" stroke="#ddd" stroke-width="1.2"/><path d="M4 7Q4 3.5 8 3.5M6.5 2L8.5 3.5L6.5 5" fill="none" stroke="#ddd" stroke-width="1"/><circle cx="11" cy="10.5" r="2.4" fill="#e02020"/></svg>
  <svg style="left:840.5px;top:11px" width="14" height="9"><rect x="3" y="2" width="10.5" height="6.5" fill="#ddd"/><path d="M0 2H3M1.5 0V3" stroke="#ddd" stroke-width="1"/></svg>
  <svg style="left:862px;top:10px" width="11" height="11"><g fill="none" stroke="#bbb" stroke-width="1.1"><path d="M1 10A9 9 0 0 1 10 1"/><path d="M3.5 10A6.5 6.5 0 0 1 10 3.5"/><path d="M6 10A4 4 0 0 1 10 6"/></g><circle cx="9.5" cy="9.5" r="1" fill="#bbb"/></svg>
  <svg style="left:879px;top:10px" width="14" height="11"><path d="M0.6 3.5H3L6.5 0.6V10.4L3 7.5H0.6Z" fill="none" stroke="#ddd" stroke-width="1.1"/><path d="M8.5 3Q10 5.5 8.5 8M10.5 1.5Q13 5.5 10.5 9.5" fill="none" stroke="#ddd" stroke-width="1.1"/></svg>
  <div class="a" style="left:901.5px;top:11.8px;font-size:9px;line-height:1;color:#e6e6e6">РУС</div>
  <div class="a" style="left:941.5px;top:4.5px;font-size:9px;line-height:1;color:#e6e6e6">18:34</div>
  <div class="a" style="left:929.5px;top:19px;font-size:9.3px;line-height:1;color:#e6e6e6">20.11.2020</div>
  <svg style="left:990px;top:8px" width="20" height="20"><path d="M0.6 0.6H13.4V10H6L3 13V10H0.6Z" fill="#eee"/><path d="M3 3.5H11M3 6H11" stroke="#888" stroke-width="0.8"/><circle cx="14" cy="14.5" r="5.2" fill="#2a2a2a" stroke="#ccc" stroke-width="0.8"/><text x="14" y="17.6" text-anchor="middle" font-family="Liberation Sans" font-weight="bold" font-size="8.5" fill="#fff">5</text></svg>
</div>
</body></html>
